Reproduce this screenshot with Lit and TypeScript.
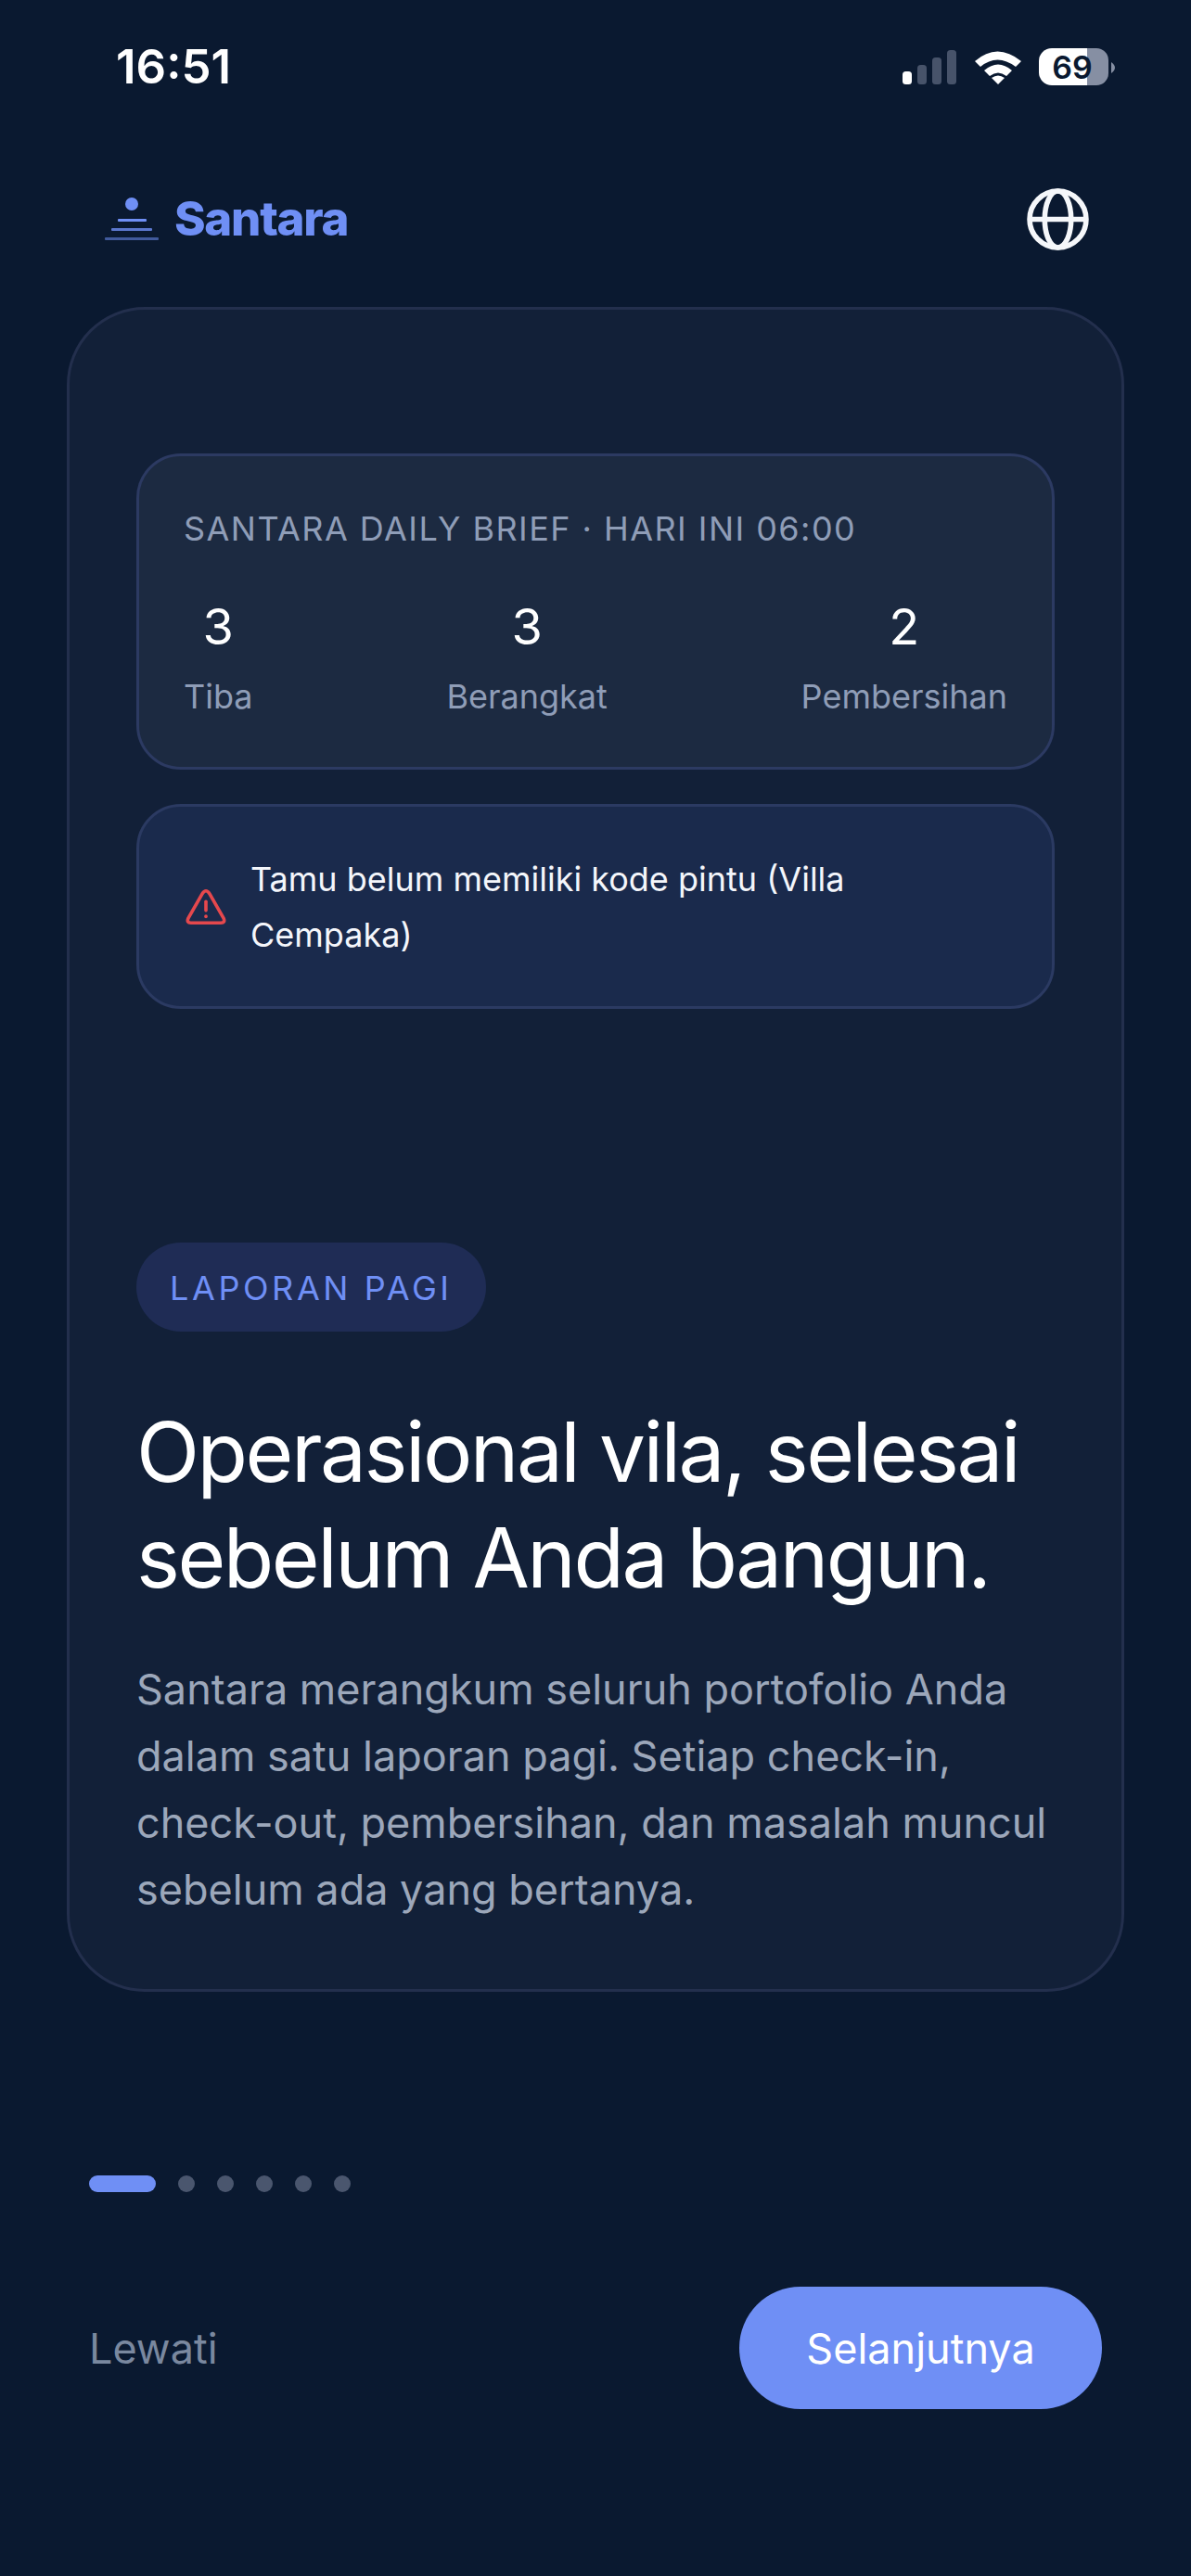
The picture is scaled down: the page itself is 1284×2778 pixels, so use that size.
import { LitElement, html, css } from "lit";
import { customElement } from "lit/decorators.js";

@customElement("app-root")
export class AppRoot extends LitElement {
  static styles = css`
    :host { display: block; width: 1284px; height: 2778px; background: #0a1930; color: #fff; font-family: Inter, "Liberation Sans", sans-serif; overflow: hidden; }
    .status { height: 144px; box-sizing: border-box; padding: 0 0 0 125px; display: flex; align-items: flex-start; position: relative; }
    .time { font-size: 51px; font-weight: 600; line-height: 62px; margin-top: 41px; letter-spacing: 0; }
    .status-icons { position: absolute; left: 970px; top: 50px; display: block; }
    .header { height: 187px; box-sizing: border-box; padding: 0 110px 2px 112px; display: flex; align-items: center; justify-content: space-between; }
    .brand { display: flex; align-items: center; gap: 16px; margin-bottom: 2px; color: #6f8ff5; font-size: 51px; font-weight: 800; letter-spacing: -1.3px; }
    .logo { display: block; }
    .globe { display: block; }
    .card { margin: 0 72px; height: 1817px; box-sizing: border-box; border: 3px solid #232f4d; border-radius: 84px; background: #122038; padding: 155px 72px 0; }
    .brief { height: 341px; box-sizing: border-box; border: 3px solid #2c3a62; border-radius: 48px; background: #1c2a41; padding: 56px 48px 0; }
    .brief-title { font-size: 36px; line-height: 44px; letter-spacing: 1.45px; color: #8f9db7; white-space: nowrap; }
    .stats { display: flex; justify-content: space-between; margin-top: 51px; }
    .stat { display: flex; flex-direction: column; align-items: center; }
    .num { font-size: 54px; line-height: 66px; color: #fff; }
    .lab { font-size: 36px; line-height: 44px; margin-top: 20px; color: #8f9db7; }
    .alert { margin-top: 37px; height: 221px; box-sizing: border-box; border: 3px solid #2b3a62; border-radius: 48px; background: #1a2a4c; padding: 0 48px 0 50px; display: flex; align-items: center; gap: 26px; }
    .alert svg { flex: none; display: block; }
    .alert-text { font-size: 36px; line-height: 60px; color: #f4f6fb; max-width: 700px; }
    .pill { margin-top: 252px; display: inline-block; height: 96px; line-height: 98px; padding: 0 36px; box-sizing: border-box; width: 377px; border-radius: 48px; background: #1f2c55; color: #6f8ff5; font-size: 36px; letter-spacing: 3.6px; white-space: nowrap; }
    .title { margin: 73px 0 0; font-size: 89px; line-height: 114px; font-weight: 400; letter-spacing: -2.5px; color: #fff; }
    .body { margin: 49px 0 0; font-size: 45px; line-height: 72px; color: #9ca7ba; }
    .dots { margin: 198px 0 0 96px; height: 18px; display: flex; gap: 24px; }
    .dot { width: 18px; height: 18px; border-radius: 50%; background: #4a566e; }
    .bar { width: 72px; height: 18px; border-radius: 9px; background: #6f8ff5; }
    .footer { margin-top: 102px; padding: 0 96px; display: flex; justify-content: space-between; align-items: center; }
    .skip { font-size: 45px; color: #7a889f; }
    .next { width: 391px; height: 132px; border-radius: 66px; border: 0; background: #6f8ff5; color: #fff; font: 400 45px Inter, "Liberation Sans", sans-serif; padding: 0; }
  `;

  render() {
    return html`
      <div class="status">
        <span class="time">16:51</span>
        <svg class="status-icons" width="240" height="50" viewBox="0 0 240 50">
          <rect x="3" y="27" width="10" height="14" rx="3.5" fill="#fff"/>
          <rect x="19" y="20" width="10" height="21" rx="3.5" fill="#47536a"/>
          <rect x="35" y="12" width="10" height="29" rx="3.5" fill="#47536a"/>
          <rect x="51" y="4" width="10" height="37" rx="3.5" fill="#47536a"/>
          <path d="M81 16 Q105 -5 131 16 L125 22 Q105 7 87 22 Z" fill="#fff"/>
          <path d="M91 26 Q106 13 121 26 L115 32 Q106 25 97 32 Z" fill="#fff"/>
          <path d="M99 34 Q106 29 113 34 L106 41 Z" fill="#fff"/>
          <path d="M164 2 H202 V42 H164 A14 14 0 0 1 150 28 V16 A14 14 0 0 1 164 2 Z" fill="#fff"/>
          <path d="M202 2 H212 A13 13 0 0 1 225 15 V29 A13 13 0 0 1 212 42 H202 Z" fill="#868fa3"/>
          <path d="M228 17 Q232 20 232 23 Q232 26 228 29 Z" fill="#868fa3"/>
          <text x="186" y="35" text-anchor="middle" font-family="Inter" font-size="34" font-weight="600" fill="#0a1930">69</text>
        </svg>
      </div>
      <div class="header">
        <div class="brand">
          <svg class="logo" width="60" height="60" viewBox="0 0 60 60">
            <circle cx="30" cy="14" r="7" fill="#6f8ff5"/>
            <rect x="15" y="30" width="31" height="3" rx="1" fill="#6f8ff5"/>
            <rect x="8" y="40" width="44" height="3" rx="1" fill="#6f8ff5" opacity=".8"/>
            <rect x="1" y="50" width="58" height="3" rx="1" fill="#6f8ff5" opacity=".55"/>
          </svg>
          <span>Santara</span>
        </div>
        <svg class="globe" width="67" height="67" viewBox="0 0 66 66" fill="none" stroke="#f5f7fa" stroke-width="5.5">
          <circle cx="33" cy="33" r="30"/>
          <ellipse cx="33" cy="33" rx="14" ry="30"/>
          <path d="M3 33 H63"/>
        </svg>
      </div>
      <div class="card">
        <div class="brief">
          <div class="brief-title">SANTARA DAILY BRIEF · HARI INI 06:00</div>
          <div class="stats">
            <div class="stat"><span class="num">3</span><span class="lab">Tiba</span></div>
            <div class="stat"><span class="num">3</span><span class="lab">Berangkat</span></div>
            <div class="stat"><span class="num">2</span><span class="lab">Pembersihan</span></div>
          </div>
        </div>
        <div class="alert">
          <svg width="44" height="42" viewBox="0 0 46 42" fill="none" stroke="#e5484d" stroke-width="3.8" stroke-linejoin="round" stroke-linecap="round">
            <path d="M23 3 Q25 3 27 6 L43 34 Q45 39 40 39 H6 Q1 39 3 34 L19 6 Q21 3 23 3 Z"/>
            <path d="M23 15 V25"/>
            <path d="M23 31.5 V32"/>
          </svg>
          <div class="alert-text">Tamu belum memiliki kode pintu (Villa Cempaka)</div>
        </div>
        <div class="pill">LAPORAN PAGI</div>
        <h1 class="title">Operasional vila, selesai sebelum Anda bangun.</h1>
        <p class="body">Santara merangkum seluruh portofolio Anda dalam satu laporan pagi. Setiap check-in, check-out, pembersihan, dan masalah muncul sebelum ada yang bertanya.</p>
      </div>
      <div class="dots">
        <span class="bar"></span>
        <span class="dot"></span><span class="dot"></span><span class="dot"></span><span class="dot"></span><span class="dot"></span>
      </div>
      <div class="footer">
        <span class="skip">Lewati</span>
        <button class="next">Selanjutnya</button>
      </div>
    `;
  }
}
